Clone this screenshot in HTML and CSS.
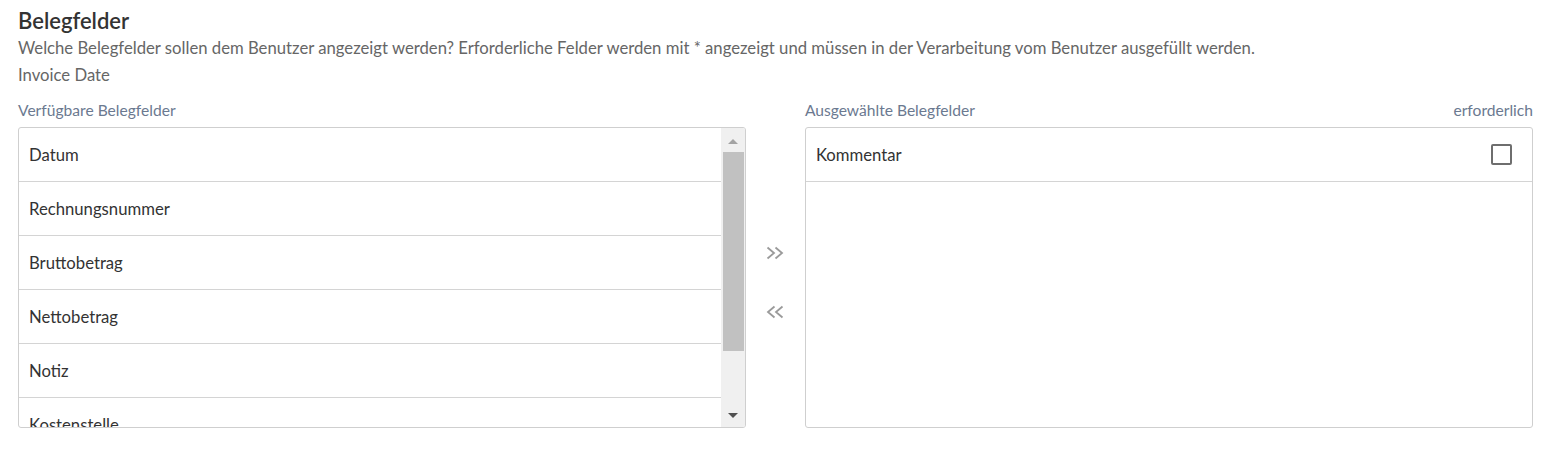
FILE: index.html
```html
<!DOCTYPE html>
<html lang="de">
<head>
<meta charset="utf-8">
<title>Belegfelder</title>
<link rel="stylesheet" href="styles.css">
</head>
<body>
<section class="fields">
  <h2 class="title">Belegfelder</h2>
  <p class="desc">Welche Belegfelder sollen dem Benutzer angezeigt werden? Erforderliche Felder werden mit * angezeigt und müssen in der Verarbeitung vom Benutzer ausgefüllt werden.</p>
  <p class="sub">Invoice Date</p>
  <div class="picker">
    <div class="col">
      <div class="col-head"><span>Verfügbare Belegfelder</span></div>
      <div class="box">
        <ul class="list">
          <li class="row">Datum</li>
          <li class="row">Rechnungsnummer</li>
          <li class="row">Bruttobetrag</li>
          <li class="row">Nettobetrag</li>
          <li class="row">Notiz</li>
          <li class="row">Kostenstelle</li>
        </ul>
        <div class="scrollbar">
          <span class="arrow up"></span>
          <span class="thumb"></span>
          <span class="track"></span>
          <span class="arrow down"></span>
        </div>
      </div>
    </div>
    <div class="moves">
      <button class="move" type="button" aria-label="Hinzufügen">
        <svg width="18" height="14" viewBox="0 0 18 14"><polyline points="1.5,1.5 8,7 1.5,12.5"/><polyline points="9.5,1.5 16,7 9.5,12.5"/></svg>
      </button>
      <button class="move" type="button" aria-label="Entfernen">
        <svg width="18" height="14" viewBox="0 0 18 14"><polyline points="8.5,1.5 2,7 8.5,12.5"/><polyline points="16.5,1.5 10,7 16.5,12.5"/></svg>
      </button>
    </div>
    <div class="col">
      <div class="col-head"><span>Ausgewählte Belegfelder</span><span>erforderlich</span></div>
      <div class="box">
        <ul class="list">
          <li class="row">Kommentar<span class="check"></span></li>
        </ul>
      </div>
    </div>
  </div>
</section>
</body>
</html>
```

FILE: styles.css
```css
html, body {
  margin: 0;
  padding: 0;
  background: #fff;
}
body {
  font-family: Lato, "Open Sans", sans-serif;
  color: #333;
}
.fields {
  padding: 7px 22px 0 18px;
}
.title {
  margin: 0;
  font-size: 22px;
  font-weight: 600;
  line-height: 27px;
  color: #333;
}
.desc, .sub {
  margin: 0;
  font-size: 16.7px;
  line-height: 27px;
  color: #666;
}
.desc { margin-top: 1px; }
.picker {
  display: flex;
  margin-top: 13px;
}
.col {
  width: 729px;
  display: flex;
  flex-direction: column;
}
.col-head {
  display: flex;
  justify-content: space-between;
  font-size: 15.6px;
  line-height: 17px;
  color: #6b7990;
  margin-bottom: 8px;
}
.box {
  height: 299px;
  border: 1px solid #cfcfcf;
  border-radius: 3px;
  display: flex;
  overflow: hidden;
}
.list {
  list-style: none;
  margin: 0;
  padding: 0;
  flex: 1;
  overflow: hidden;
}
.row {
  height: 53px;
  border-bottom: 1px solid #d4d4d4;
  display: flex;
  align-items: center;
  justify-content: space-between;
  padding: 0 20px 0 10px;
  font-size: 16.7px;
  color: #333;
}
.check {
  width: 17px;
  height: 17px;
  border: 2px solid #6e6e6e;
  border-radius: 2px;
}
.scrollbar {
  width: 24px;
  background: #f0f0f0;
  display: flex;
  flex-direction: column;
  align-items: center;
}
.arrow {
  height: 24px;
  width: 100%;
  position: relative;
}
.arrow::after {
  content: "";
  position: absolute;
  left: 7px;
  border-left: 5px solid transparent;
  border-right: 5px solid transparent;
}
.up::after {
  top: 11px;
  border-bottom: 5px solid #a3a3a3;
}
.down::after {
  top: 10px;
  border-top: 5px solid #505050;
}
.thumb {
  width: 21px;
  height: 199px;
  background: #c1c1c1;
}
.track { flex: 1; }
.moves {
  width: 59px;
  display: flex;
  flex-direction: column;
  align-items: center;
  padding-top: 144px;
  gap: 45px;
}
.move {
  border: 0;
  background: none;
  padding: 0;
  width: 18px;
  height: 14px;
  cursor: pointer;
}
.move svg {
  display: block;
  fill: none;
  stroke: #9a9a9a;
  stroke-width: 1.8;
}
```
